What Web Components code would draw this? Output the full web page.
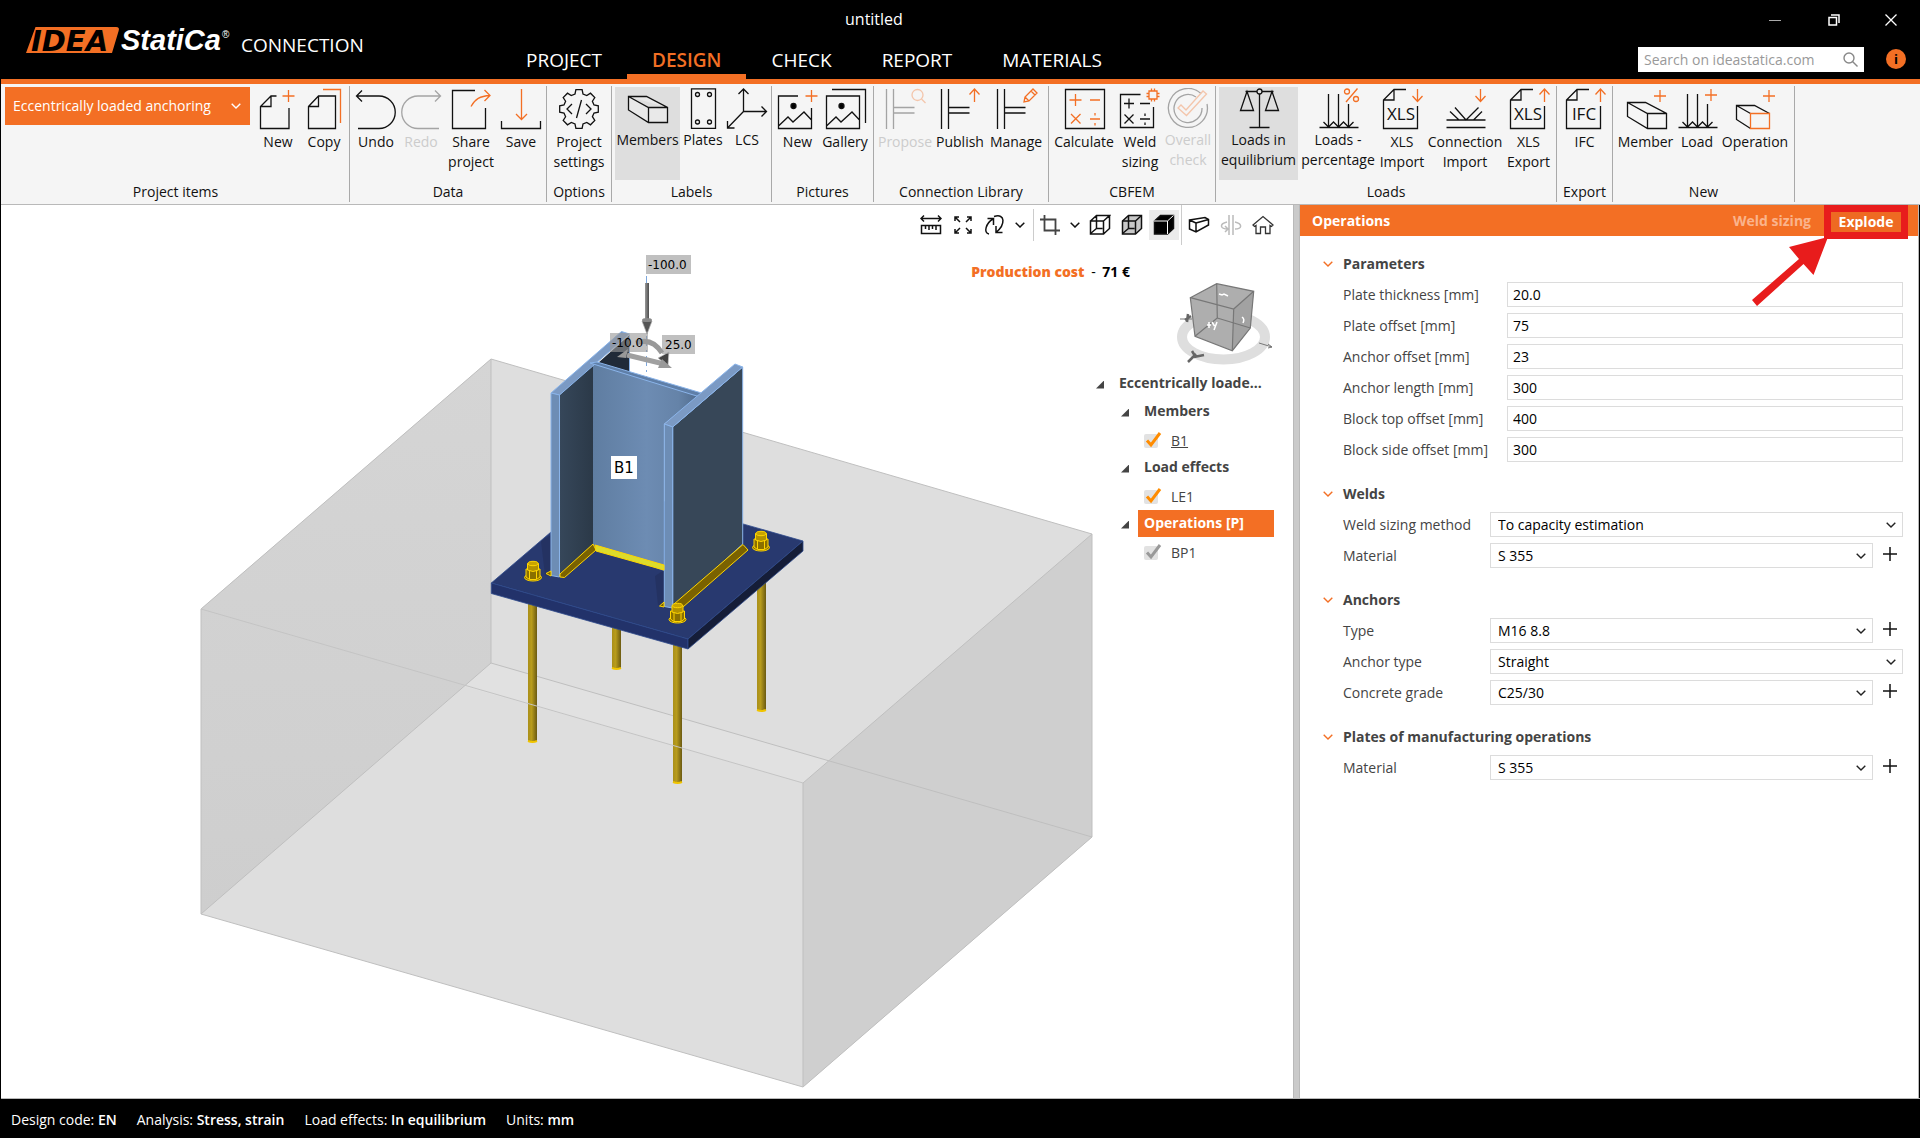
<!DOCTYPE html>
<html lang="en">
<head>
<meta charset="utf-8">
<title>IDEA StatiCa Connection</title>
<style>
  html, body { height: 100%; margin: 0; background: #000; }
  body { font: 14px/20px "Open Sans", "Noto Sans", sans-serif; color: #111; --orange: #f36f24; --line: #b9b9b9; }
</style>
</head>
<body>
<app-shell></app-shell>
<script>
const plus = (x, y, r = 6) => `<path class="o" d="M${x - r} ${y}h${2 * r}M${x} ${y - r}v${2 * r}"/>`;
const down = (x, y) => `<path class="o" d="M${x} ${y}v12M${x - 5} ${y + 7}l5 5.500 5-5.500"/>`;
const up = (x, y) => `<path class="o" d="M${x} ${y + 13}v-13M${x - 5} ${y + 5.5}l5-5.500 5 5.500"/>`;
const beam = '<path d="M5.500 1v40M12.500 1v40M12.500 19.500h21M12.500 25h21"/>';
const doc = word => `<path d="M28 1.500H16L5.500 12V40.500H39.500V18M16 1.500V12H5.500"/><text x="23" y="32" text-anchor="middle">${word}</text>`;
const loads = '<path d="M14.500 6v32M24.500 6v32M34.500 16v22M5.500 39.500h39M9.500 34l5 5 5-5 5 5 5-5 5 5 5-5"/>';
const gear = (() => {
  const pts = [];
  for (let i = 0; i < 8; i++) {
    for (const [a, r] of [[-15, 15.5], [-9, 19.5], [9, 19.5], [15, 15.5]]) {
      const t = (i * 45 + a) * Math.PI / 180;
      pts.push((24 + r * Math.sin(t)).toFixed(1) + ' ' + (21 - r * Math.cos(t)).toFixed(1));
    }
  }
  return 'M' + pts.join('L') + 'Z';
})();

const ICONS = {
  newdoc: '<path d="M22.500 8H17L6.500 18.500V40.500H35V20M17 8V18.500H6.500"/>' + plus(34.5, 8),
  copy: '<path d="M8.500 18.500L18.500 8H35.500V40.500H8.500ZM18.500 8V18.500H8.500"/><path class="o" d="M23 1.500H40.500V35"/>',
  undo: '<path d="M4.500 8H27a16.200 16.200 0 0 1 0 32.500H6M10 2.500L4.500 8L10 13.500"/>',
  redo: '<path d="M43.500 8H21a16.200 16.200 0 0 0 0 32.500H42M38 2.500L43.500 8L38 13.500"/>',
  share: '<path d="M28 2.500H5.500V40.500H38.500V20"/><path class="o" d="M24 18.500C28 11 33 8 43 7.500M37.500 2l5.500 5.500-5.500 5.500"/>',
  save: '<path d="M4.500 33V40.500H43.500V33"/><path class="o" d="M24.500 1V31.500M19 26l5.500 5.500 5.500-5.500"/>',
  settings: `<path d="${gear}"/><path d="M17 16l-5 5 5 5M31 16l5 5-5 5M26.500 12l-5 18"/>`,
  members: '<path fill="#e9e9e9" d="M4.500 8.500H22.500L43.500 19.500V34.500H24.500L4.500 22ZM4.500 8.500L24.500 19.500H43.500M24.500 19.500V34.500"/>',
  plates: '<path d="M12.500 .8h24v39.500h-24z"/><circle cx="18.500" cy="6.500" r="2"/><circle cx="30.500" cy="6.500" r="2"/><circle cx="18.500" cy="34" r="2"/><circle cx="30.500" cy="34" r="2"/>',
  lcs: '<path d="M20.500 1V23.500H43.500M20.500 23.500L4.500 40M15.500 6l5-5 5 5M38.500 18.500l5 5-5 5M4.500 33v7h7"/>',
  picnew: '<path d="M24 8H4.500V40.500H37.500V20M4.500 38L14 29l5 5L30 24l7.500 8"/><circle cx="19.500" cy="18" r="2.500" fill="#000"/>' + plus(37.5, 8),
  gallery: '<path d="M5.500 8H38.500V40.500H5.500ZM5.500 38L15 29l5 5L31 24l7.500 8M11 1.500H44.500V35"/><circle cx="20.500" cy="18" r="2.500" fill="#000"/>',
  propose: beam + '<g class="o"><circle cx="36.500" cy="7" r="5.500"/><path d="M40.500 11l4 4"/></g>',
  publish: beam + up(38.5, 1),
  manage: beam + '<path class="o" d="M32 14l1-5 8-8 4 4-8 8zM33 9l4 4M39 3l4 4"/>',
  calculate: '<path d="M5.500 1.500h39v39h-39z"/>' + plus(15.5, 12) + '<path class="o" d="M30 12h10M11 26l9.500 9.500M20.500 26L11 35.500M30 31h10"/><path class="o" d="M35 25v2.500M35 35v2.500"/>',
  weld: '<path d="M24.500 6.500H4.500V39.500H37.500V19"/><path d="M8 15.500h10M13 10.500v10M24 15.500h10M8.500 26.500l9 9M17.500 26.500l-9 9M24 31h10M29 25.500v2.500M29 34.500v2.500"/><path class="o" d="M33 3h8v8h-8zM35.500 3V.5M38.500 3V.5M35.500 11v2.500M38.500 11v2.500M33 5.500H30.500M33 8.500H30.500M41 5.500h2.500M41 8.500h2.500"/>',
  check: '<path d="M37 5.500A19.500 19.500 0 1 0 43 16M32 9A14 14 0 1 0 38 20"/><path class="o" d="M14 20l3-3 5 5L39 3l3.500 3L22.500 27.500z"/>',
  scales: '<circle cx="24.500" cy="3.500" r="2.500"/><path d="M22 3.500H10.500M27 3.500H38.500M24.500 6V39.500M14.500 39.500h20M12 3.500L5.500 22.500H18.500ZM37 3.500L30.500 22.500H43.500Z"/>',
  percent: loads + '<g class="o"><circle cx="33" cy="3.500" r="2.500"/><circle cx="42" cy="11" r="2.500"/><path d="M43.500 .5L32 14"/></g>',
  xlsin: doc('XLS') + down(39.5, 1),
  connin: '<path d="M5.500 32h39M5.500 39.500h39M14 19.500L25 32L37.500 19.500M9 23.500l9 8.500M41 23.500L32.500 32"/>' + down(39.5, 1),
  xlsout: doc('XLS') + up(39.5, 1),
  ifc: doc('IFC') + up(39.5, 1),
  member: '<path d="M5.500 14.500H23.500L44.500 25.500V40.500H25.500L5.500 28.500ZM5.500 14.500L25.500 25.500H44.500M25.500 25.500V40.500"/>' + plus(38, 8),
  load: loads + plus(38, 7),
  operation: '<path d="M38.500 25.500L23.500 17.500H5.500V31.500L19.500 40.500M5.500 17.500L19.500 25.500"/><path class="o" d="M19.500 25.500h19v15h-19z"/>' + plus(38, 8)
};

const CHEV = '<svg class="chev" width="10" height="6" viewBox="0 0 10 6" fill="none" stroke="currentColor" stroke-width="1.400"><path d="M.7.700L5 5 9.300.7"/></svg>';

const define = (name, markup, setup) => {
  const tpl = document.createElement('template');
  tpl.innerHTML = markup;
  customElements.define(name, class extends HTMLElement {
    connectedCallback() {
      if (this.shadowRoot) return;
      this.attachShadow({ mode: 'open' }).append(tpl.content.cloneNode(true));
      if (setup) setup(this, this.shadowRoot);
    }
  });
};

define('app-logo', `
<style>:host{display:block}svg{display:block}</style>
<svg width="208" height="48" viewBox="26 16 208 48" role="img">
  <path fill="#f36f24" d="M26 53L35.500 27H116Q120 27 118.600 31L112 53Z"/>
  <text x="31" y="51" font-family="DejaVu Sans" font-weight="bold" font-style="oblique" font-size="29">IDEA</text>
  <text x="121" y="50" fill="#fff" font-family="Liberation Sans" font-weight="bold" font-style="italic" font-size="29">StatiCa</text>
  <text x="222" y="38" fill="#fff" font-family="Liberation Sans" font-size="10">®</text>
</svg>`);

define('app-header', `
<style>
  :host{display:grid;grid-template-columns:500px 1fr auto;grid-template-rows:40px 39px;background:#000;color:#fff;border-bottom:5px solid var(--orange)}
  .brand{grid-row:1/3;display:flex;align-items:center;gap:7px;padding:0 0 0 25px;font-size:19px;height:80px}
  .brand span{padding-top:10px}
  .title{padding:7px 0 0 344px;font-size:16px;line-height:24px}
  nav{display:flex;align-items:stretch}
  nav a{padding:6px 25px 0;color:#fff;text-decoration:none;font-size:19px;line-height:28px;border-bottom:5px solid transparent}
  nav a.on{color:var(--orange);font-weight:600;border-color:var(--orange)}
  .win{display:flex;justify-content:flex-end;padding-right:1px}
  button{background:none;border:0;padding:0;width:57px;height:40px;display:grid;place-items:center;color:#fff}
  .win button:first-child{width:60px}
  .find{display:flex;align-items:flex-start;padding:7px 14px 0 0;gap:22px}
  .box{display:flex;align-items:center;background:#fff;width:226px;height:25px;box-sizing:border-box;padding:0 6px;color:#888}
  input{border:0;outline:0;flex:1;min-width:0;padding:0;font:inherit;background:none}
  input::placeholder{color:#999;opacity:1}
  .find button{width:20px;height:20px;border-radius:50%;background:var(--orange);color:#000;font:bold 13px/20px "Open Sans",sans-serif;margin-top:2px}
</style>
<div class="brand"><app-logo></app-logo><span>CONNECTION</span></div>
<div class="title">untitled</div>
<div class="win">
  <button aria-label="Minimize"><svg width="12" height="12"><path d="M0 6.500h12" stroke="#aaa"/></svg></button>
  <button aria-label="Restore"><svg width="12" height="12" fill="none" stroke="#fff" stroke-width="1.500"><path d="M1 3.500h7.500v7.500H1zM3 1h8v8"/></svg></button>
  <button aria-label="Close"><svg width="12" height="12" stroke="#fff" stroke-width="1.300"><path d="M.5.500l11 11M11.500.500l-11 11"/></svg></button>
</div>
<nav><a href="#project">PROJECT</a><a href="#design" class="on">DESIGN</a><a href="#check">CHECK</a><a href="#report">REPORT</a><a href="#materials">MATERIALS</a></nav>
<div class="find">
  <label class="box"><input type="search" placeholder="Search on ideastatica.com" aria-label="Search on ideastatica.com"><svg width="15" height="15" fill="none" stroke="#888" stroke-width="1.400"><circle cx="6" cy="6" r="5"/><path d="M9.500 9.500l5 5"/></svg></label>
  <button aria-label="Information">i</button>
</div>`);

define('ribbon-button', `
<style>
  :host{display:block;height:93px}
  button{width:100%;height:100%;border:0;background:none;padding:1px 0 0;display:flex;flex-direction:column;align-items:center;gap:2px;font:inherit;color:#111}
  :host([active]) button{background:#dedede}
  :host([disabled]) button{color:#ccc}
  :host([tight]) button{gap:0}
  svg{display:block;flex:none;fill:none;stroke:#111;stroke-width:1.300}
  svg text{fill:#111;stroke:none;font-size:17px}
  .o{stroke:var(--orange)}
  :host([disabled]) svg{opacity:.35}
  span{white-space:pre;text-align:center;line-height:20px}
</style>
<button><svg width="48" height="42" viewBox="0 0 48 42"></svg><span><slot></slot></span></button>`,
(el, root) => {
  root.querySelector('svg').innerHTML = ICONS[el.getAttribute('icon')];
  root.querySelector('button').disabled = el.hasAttribute('disabled');
  el.style.width = el.getAttribute('w') + 'px';
});

define('ribbon-group', `
<style>
  :host{display:flex;flex-direction:column;justify-content:space-between;padding:1px 3px 0;height:115px;border-right:1px solid #a9a9a9;flex:none}
  .tools{display:flex}
  .name{text-align:center;line-height:20px}
</style>
<div class="tools"><slot></slot></div><div class="name"></div>`,
(el, root) => { root.querySelector('.name').textContent = el.getAttribute('name'); });

define('item-picker', `
<style>
  :host{display:grid;width:245px;height:38px;margin-right:4px;background:var(--orange);color:#fff;align-items:center}
  select{grid-area:1/1;appearance:none;border:0;background:none;color:#fff;font:inherit;height:100%;padding:0 30px 0 8px}
  .chev{grid-area:1/1;justify-self:end;margin-right:9px;pointer-events:none}
</style>
<select aria-label="Project item"><option>Eccentrically loaded anchoring</option></select>${CHEV}`);

define('ribbon-bar', `
<style>:host{display:flex;background:#f5f5f5;padding:2px 0 2px 1px;border-bottom:1px solid var(--line)}</style>
<ribbon-group name="Project items"><item-picker></item-picker><ribbon-button icon="newdoc" w="48">New</ribbon-button><ribbon-button icon="copy" w="44">Copy</ribbon-button></ribbon-group>
<ribbon-group name="Data"><ribbon-button icon="undo" w="46">Undo</ribbon-button><ribbon-button icon="redo" w="44" disabled>Redo</ribbon-button><ribbon-button icon="share" w="56">Share
project</ribbon-button><ribbon-button icon="save" w="44">Save</ribbon-button></ribbon-group>
<ribbon-group name="Options"><ribbon-button icon="settings" w="58">Project
settings</ribbon-button></ribbon-group>
<ribbon-group name="Labels"><ribbon-button icon="members" w="65" active tight>Members</ribbon-button><ribbon-button icon="plates" w="46" tight>Plates</ribbon-button><ribbon-button icon="lcs" w="42" tight>LCS</ribbon-button></ribbon-group>
<ribbon-group name="Pictures"><ribbon-button icon="picnew" w="45">New</ribbon-button><ribbon-button icon="gallery" w="50">Gallery</ribbon-button></ribbon-group>
<ribbon-group name="Connection Library"><ribbon-button icon="propose" w="56" disabled>Propose</ribbon-button><ribbon-button icon="publish" w="54">Publish</ribbon-button><ribbon-button icon="manage" w="58">Manage</ribbon-button></ribbon-group>
<ribbon-group name="CBFEM"><ribbon-button icon="calculate" w="64">Calculate</ribbon-button><ribbon-button icon="weld" w="48">Weld
sizing</ribbon-button><ribbon-button icon="check" w="48" disabled tight>Overall
check</ribbon-button></ribbon-group>
<ribbon-group name="Loads"><ribbon-button icon="scales" w="79" active tight>Loads in
equilibrium</ribbon-button><ribbon-button icon="percent" w="80" tight>Loads -
percentage</ribbon-button><ribbon-button icon="xlsin" w="48">XLS
Import</ribbon-button><ribbon-button icon="connin" w="78">Connection
Import</ribbon-button><ribbon-button icon="xlsout" w="49">XLS
Export</ribbon-button></ribbon-group>
<ribbon-group name="Export"><ribbon-button icon="ifc" w="49">IFC</ribbon-button></ribbon-group>
<ribbon-group name="New"><ribbon-button icon="member" w="59">Member</ribbon-button><ribbon-button icon="load" w="44">Load</ribbon-button><ribbon-button icon="operation" w="72">Operation</ribbon-button></ribbon-group>`);

define('model-scene', `
<style>:host{display:block}svg{display:block;width:100%;height:100%}text{font-family:"DejaVu Sans",sans-serif}</style>
<svg viewBox="1 205 1292 893" role="img" aria-label="Anchored column on a concrete block">
  <defs>
    <linearGradient id="rod"><stop offset="0" stop-color="#a98f1a"/><stop offset=".4" stop-color="#b89c1c"/><stop offset="1" stop-color="#6b5a12"/></linearGradient>
    <linearGradient id="web"><stop offset="0" stop-color="#5f7da1"/><stop offset=".5" stop-color="#6d8cb3"/><stop offset=".8" stop-color="#6583a8"/><stop offset="1" stop-color="#4f6a8c"/></linearGradient>
    <linearGradient id="inner"><stop offset="0" stop-color="#36475a"/><stop offset="1" stop-color="#2b3948"/></linearGradient>
    <linearGradient id="left" x2="0" y2="1"><stop offset="0" stop-color="#d5d5d5"/><stop offset="1" stop-color="#cecece"/></linearGradient>
    <linearGradient id="gr"><stop offset="0" stop-color="#999"/><stop offset="1" stop-color="#4d4d4d"/></linearGradient>
    <g id="nut" stroke="#ffd500">
      <ellipse cx="0" cy="6.500" rx="8.500" ry="3.500" fill="#8a7000"/>
      <path fill="#8a7000" d="M-7-2h14v8l-3.500 2.500h-7L-7 6z"/>
      <path fill="none" d="M-3.500 0v8M3.500 0v8"/>
      <path fill="#b39200" d="M-5.500-7.500V-1Q0 2 5.500-1V-7.500Z"/><ellipse cx="0" cy="-7.500" rx="5" ry="2.200" fill="#c9a400"/>
    </g>
  </defs>
  <path fill="#dedede" d="M201 609L491 359L1092 534V837L803 1087L201 914Z"/>
  <path fill="#e2e2e2" d="M491 663L1092 837L803 783L463 686Z" opacity=".7"/>
  <path fill="url(#left)" d="M201 609L491 359V663L201 914Z"/>
  <path fill="#cfcfcf" d="M803 783L1092 534V837L803 1087Z"/>
  <g fill="none" stroke="#bfbfbf"><path d="M201 609L491 359L1092 534V837L803 1087L201 914ZM803 783V1087M803 783L1092 534M491 359V663L201 914M491 663L1092 837"/></g>
  <g fill="url(#rod)">
    <rect x="612" y="615" width="9" height="53"/><rect x="757" y="560" width="9" height="151"/>
    <rect x="528" y="590" width="9" height="151"/><rect x="673" y="635" width="9" height="148"/>
  </g>
  <path fill="none" stroke="#f0c400" stroke-width="2" d="M612 668q4.500 2 9 0M757 710q4.500 2 9 0M528 741q4.500 2 9 0M673 782q4.500 2 9 0"/>
  <path fill="none" stroke="#c4c4c4" d="M201 609L803 783"/>
  <g stroke="#2f4a8c" stroke-width=".8">
    <path fill="#28396f" d="M491.300 583L606 485L803 541L688 639Z"/>
    <path fill="#22326a" d="M491.300 583L688 639V649L491.300 593.500Z"/>
    <path fill="#151d38" d="M688 639L803 541V551L688 649Z"/>
  </g>
  <path fill="#1f2b55" opacity=".5" d="M551 535L541 541L545 575L551 577ZM664 570L655 576L658 605L664 607Z"/>
  <path stroke="#7da7dc" stroke-dasharray="10 4 2 4" d="M646.500 276V377"/>
  <g stroke="#8ab4ea" stroke-linejoin="round">
    <path fill="#202a38" stroke="none" d="M598 363L629.500 335V373Z"/><path fill="none" d="M629.500 336V373"/>
    <path fill="url(#inner)" stroke="none" d="M559.500 395L593 364V545L559.500 577Z"/>
    <path fill="url(#web)" stroke="none" d="M593 363L700 396L664 424V571L593 545Z"/>
    <path fill="#7b9ac4" d="M551 393L621.500 331.500L629.500 334L559.500 395Z"/>
    <path fill="#5f7fa8" d="M590 363L597 362L705 394L700 397Z"/>
    <path fill="#6d8db5" d="M551 393L559.500 395V577L551 575.500Z"/>
    <path fill="#374758" d="M672.700 427L742.700 367V544L672.700 608Z"/>
    <path fill="#7b9ac4" d="M664.300 424L735 364L742.700 367L672.700 427Z"/>
    <path fill="#6d8db5" d="M664.300 424L672.700 427V608L664.300 606.500Z"/>
  </g>
  <g stroke="#ffd500" stroke-linejoin="round">
    <path fill="#7a6200" d="M560 574L593 544L596 550L564.500 577.500L560 577Z"/>
    <path fill="#dcdc2c" d="M595 545L664 565V570L596 551Z"/>
    <path fill="#7a6200" d="M674 604L743 544.500L748 550L683 607Z"/>
    <path fill="#7a6200" d="M546 573.500L551 571V576ZM659.500 606L664 602V607Z"/>
  </g>
  <use href="#nut" x="533" y="571"/><use href="#nut" x="761" y="541"/><use href="#nut" x="677.500" y="613"/>
  <rect x="645" y="283" width="4" height="38" fill="url(#gr)"/><path fill="#555" stroke="#aaa" stroke-width=".7" d="M642 321h10l-5 13z"/><ellipse cx="647" cy="320" rx="5" ry="2" fill="#888"/>
  <path fill="none" stroke="#999" stroke-width="5" d="M636 343Q652 337 662 353"/><path fill="#444" stroke="#ccc" stroke-width=".7" d="M658 358L669 352L668 366Z"/>
  <path stroke="#a0a0a0" stroke-width="5" d="M627 355L664 364"/><path fill="#999" d="M658 368L672 368L662 359ZM617 357L628 349L626 358Z"/>
  <g font-size="12"><g fill="#9a9a9a" fill-opacity=".62"><rect x="646" y="255" width="45" height="19"/><rect x="610" y="333" width="38" height="19"/><rect x="662" y="335" width="33" height="19"/></g>
    <text x="648" y="269">-100.0</text><text x="612" y="347">-10.0</text><text x="665" y="349">25.0</text></g>
  <rect x="611" y="456" width="26" height="23" fill="#fff"/><text x="614" y="473" font-size="15">B1</text>
</svg>`);

define('view-cube', `
<style>:host{display:block}svg{display:block}</style>
<svg width="100" height="84" viewBox="1175 281 100 84" fill="none">
  <ellipse cx="1223.500" cy="336" rx="41.500" ry="22.500" stroke="#dedede" stroke-width="10"/>
  <path fill="#aeaeae" d="M1190.300 296.700L1216.700 282.700L1253.700 290.300L1250.300 327L1232.300 349.700L1195 335.300Z"/>
  <path fill="#a2a2a2" d="M1253.700 290.300L1250.300 327L1232.300 349.700L1233.700 308Z"/>
  <path stroke="#777" stroke-width="1.200" d="M1190.300 296.700L1216.700 282.700L1253.700 290.300L1250.300 327L1232.300 349.700L1195 335.300ZM1190.300 296.700L1233.700 308L1253.700 290.300M1233.700 308L1232.300 349.700M1216.700 282.700L1217.300 317L1195 335.300M1217.300 317L1250.300 327"/>
  <path stroke="#fff" stroke-width="1.500" d="M1209 321v6M1207 324h4M1212 321l2.500 4M1217 321l-3 8M1219 293l3 1 2-1 4 2M1242 316q3 2 1 6"/>
  <path stroke="#777" d="M1180 318h12M1259 342l13 4M1268 343l4 3-4 1"/><path stroke="#666" stroke-width="2.500" d="M1188 313l-1 8M1185 319l6-4M1188 361l8-8M1192 350l3 5M1204 354l-10 2"/>
</svg>`);

define('tree-row', `
<style>
  :host{display:grid;grid-template-columns:auto 1fr;height:28px;align-items:center;color:#444}
  .head{font-weight:700;line-height:26px;height:27px;padding-left:6px;white-space:nowrap}
  :host([level="2"]){padding-left:25px}
  :host([level="3"]){padding:4px 0 0 48px;box-sizing:border-box}
  :host([selected]) .head{background:var(--orange);color:#fff}
  .arrow{width:8px;height:8px;background:#444;clip-path:polygon(100% 0,100% 100%,0 100%);margin:3px 9px 0 0}
  .tick{display:grid;width:14px;height:14px}
  input{appearance:none;margin:0;grid-area:1/1;width:14px;height:14px;border-radius:2px;background:#e2e2e2}
  svg{grid-area:1/1;overflow:visible;pointer-events:none}
  label{padding-left:13px}
  :host([link]) label{text-decoration:underline}
</style><slot name="x"></slot>`,
(el, root) => {
  const text = el.getAttribute('text');
  const box = document.createElement('template');
  const id = 'c-' + text;
  box.innerHTML = el.getAttribute('level') === '3'
    ? `<span class="tick"><input type="checkbox" checked id="${id}"><svg width="14" height="14" fill="none" stroke="${el.getAttribute('tick')}" stroke-width="3"><path d="M3 6.500l4 4.500L16-1"/></svg></span><label for="${id}">${text}</label>`
    : `<span class="arrow"></span><span class="head">${text}</span>`;
  root.querySelector('slot').replaceWith(box.content);
});

define('model-viewport', `
<style>
  :host{position:relative;display:flex;flex-direction:column;align-items:flex-end;background:#fff;min-width:0;flex:1}
  model-scene{position:absolute;inset:0}
  .bar,.cost,view-cube,.tree{position:relative}
  .bar{display:flex;align-items:center;height:40px;padding-right:14px}
  .bar button{width:32px;height:30px;padding:0;border:0;background:none;display:grid;place-items:center;color:#222}
  .bar button.c{width:18px}
  .bar button.on{background:#ebebeb;width:30px;margin:0 1px}
  .bar i{width:1px;height:32px;background:#ccc;margin-left:4px}
  .bar i.b{height:40px;margin:0 1px}
  .bar svg{fill:none;stroke:#111;stroke-width:1.500}
  .cost{padding:17px 163px 0 0;font-weight:700;color:#000}
  .cost b{color:var(--orange)} .cost span{font-weight:400;padding:0 3px}
  view-cube{margin:0 18px 3px 0}
  .tree{width:178px;margin-right:19px}
</style>
<model-scene></model-scene>
<div class="bar">
  <button aria-label="Measure"><svg width="22" height="22"><path d="M1 4.500h20M4 1.500l-3 3 3 3M18 1.500l3 3-3 3M1.500 11.500h19v8h-19zM5.500 12v3M9 12v4M12.500 12v3M16 12v4"/></svg></button>
  <button aria-label="Zoom to fit"><svg width="20" height="20"><path d="M2 6V2h4M2 2l5 5M14 2h4v4M18 2l-5 5M2 14v4h4M2 18l5-5M18 14v4h-4M18 18l-5-5"/></svg></button>
  <button aria-label="Rotate"><svg width="22" height="22"><path d="M5 20C-1 19 2 9 9 5M3.500 4.500H9.500V11M10 2.500C22-1 21 11 12.500 18M12 12v6.500h6.500"/></svg></button>
  <button class="c" aria-label="Rotate options">${CHEV}</button><i></i>
  <button aria-label="Section"><svg width="20" height="20" ><path stroke="#444" stroke-width="1.800" d="M0 4.500h15.500V20M4.500 0v15.500H20"/></svg></button>
  <button class="c" aria-label="Section options">${CHEV}</button>
  <button aria-label="Wireframe"><svg width="22" height="22"><path d="M1.500 7h13v13h-13zM1.500 7l6-5.500h13L14.500 7M20.500 1.500v13l-6 5.500M7.500 2v12.500l-6 5M7.500 14.500h6"/></svg></button>
  <button aria-label="Transparent"><svg width="22" height="22"><path fill="#c8c8c8" d="M1.500 7l6-5.500h13v13l-6 5.500h-13z"/><path d="M1.500 7h13v13M14.500 7l6-5.500M7.500 2v12.500l-6 5M7.500 14.500h6"/></svg></button>
  <button class="on" aria-label="Solid"><svg width="22" height="22"><path fill="#000" d="M1.500 7l6-5.500h13v13l-6 5.500h-13z"/><path stroke="#fff" stroke-width="1" d="M1 7h13.500l6-5.500M14.500 7v13"/></svg></button><i class="b"></i>
  <button aria-label="Member view"><svg width="22" height="18"><path d="M1.500 4L17 1.500l3.500 2V9L8 16l-6.500-3zM1.500 4L8 7v9M8 7l12.500-3.500"/></svg></button>
  <button aria-label="Spin"><svg width="22" height="22"><path stroke="#bbb" d="M9 1v20M13 1v20M7 8C-1 10 0 15 8 15M15 8c8 2 7 7 0 7M5 12l3 3-3 3"/></svg></button>
  <button aria-label="Home"><svg width="22" height="20"><path stroke="#333" stroke-width="1.300" d="M1 10L11 1.500 21 10l-1.500 1.500L18 10.500V18.500h-4.500V12h-5v6.500H4V10.500l-1.500 1z"/></svg></button>
</div>
<div class="cost"><b>Production cost</b> <span>-</span> 71 €</div>
<view-cube></view-cube>
<div class="tree">
  <tree-row level="1" text="Eccentrically loade..."></tree-row>
  <tree-row level="2" text="Members"></tree-row>
  <tree-row level="3" text="B1" tick="#ff8c00" link></tree-row>
  <tree-row level="2" text="Load effects"></tree-row>
  <tree-row level="3" text="LE1" tick="#ff8c00"></tree-row>
  <tree-row level="2" text="Operations [P]" selected></tree-row>
  <tree-row level="3" text="BP1" tick="#999"></tree-row>
</div>`);

define('param-field', `
<style>
  :host{display:grid;grid-template-columns:164px 1fr;height:25px;align-items:center;color:#444}
  :host([options]){grid-template-columns:147px 1fr}
  :host([add]){grid-template-columns:147px 1fr 30px}
  input,select{grid-area:1/2;appearance:none;width:100%;height:25px;box-sizing:border-box;border:1px solid #dcdcdc;border-radius:0;background:#fff;font:inherit;line-height:20px;color:#000;padding:0 5px;outline:0}
  select{padding:0 7px}
  label{white-space:nowrap}
  .chev{grid-area:1/2;justify-self:end;margin-right:7px;pointer-events:none;color:#222}
  button{width:30px;height:25px;border:0;background:none;padding:0 0 0 3px}
</style>`,
(el, root) => {
  const name = el.getAttribute('label');
  const value = el.getAttribute('value');
  const pick = el.hasAttribute('options');
  const t = document.createElement('template');
  t.innerHTML = `<label for="f">${name}</label>` + (pick
    ? `<select id="f"><option>${value}</option></select>${CHEV}`
    : `<input id="f" type="text" value="${value}">`)
    + (el.hasAttribute('add') ? `<button aria-label="Add ${name}"><svg width="14" height="14" stroke="#111" stroke-width="1.500"><path d="M0 7h14M7 0v14"/></svg></button>` : '');
  root.append(t.content);
});

define('param-section', `
<style>
  :host{display:flex;flex-direction:column;gap:6px}
  h3{margin:0;font:700 14px/24px "Open Sans","Noto Sans",sans-serif;color:#444;display:flex;align-items:center;gap:10px}
  .chev{color:var(--orange);margin-left:-20px}
</style>
<h3>${CHEV}<span></span></h3><slot></slot>`,
(el, root) => { root.querySelector('span').textContent = el.getAttribute('title-text'); });

define('operations-panel', `
<style>
  :host{display:block;background:#fff;width:619px;flex:none;position:relative;border-right:1px solid var(--line);margin-right:1px;box-sizing:border-box}
  header{display:flex;align-items:center;height:31px;background:var(--orange);color:#fff;font-weight:700;padding:0 10px 0 12px}
  h2{font:inherit;margin:0;flex:1}
  button{font:inherit;border:0;background:none;color:#fff;padding:0}
  .weld{color:#fab48c;margin-right:13px}
  .explode{width:84px;height:34px;box-sizing:border-box;border:7px solid #e81c1c;background:#ee6a22;align-self:flex-start}
  .body{display:flex;flex-direction:column;gap:20px;padding:16px 15px 0 43px}
  .pointer{position:absolute;right:89px;top:32px}
</style>
<header><h2>Operations</h2><button class="weld" disabled>Weld sizing</button><button class="explode">Explode</button></header>
<div class="body">
  <param-section title-text="Parameters">
    <param-field label="Plate thickness [mm]" value="20.0"></param-field>
    <param-field label="Plate offset [mm]" value="75"></param-field>
    <param-field label="Anchor offset [mm]" value="23"></param-field>
    <param-field label="Anchor length [mm]" value="300"></param-field>
    <param-field label="Block top offset [mm]" value="400"></param-field>
    <param-field label="Block side offset [mm]" value="300"></param-field>
  </param-section>
  <param-section title-text="Welds">
    <param-field label="Weld sizing method" value="To capacity estimation" options></param-field>
    <param-field label="Material" value="S 355" options add></param-field>
  </param-section>
  <param-section title-text="Anchors">
    <param-field label="Type" value="M16 8.8" options add></param-field>
    <param-field label="Anchor type" value="Straight" options></param-field>
    <param-field label="Concrete grade" value="C25/30" options add></param-field>
  </param-section>
  <param-section title-text="Plates of manufacturing operations">
    <param-field label="Material" value="S 355" options add></param-field>
  </param-section>
</div>
<svg class="pointer" width="77" height="70" viewBox="1752 237 77 70"><path fill="#e81c1c" d="M1828 237L1789 247L1799 259L1752 300L1757 306L1803.500 264L1813.500 275Z"/></svg>`);

define('status-bar', `
<style>
  :host{display:flex;align-items:center;gap:20px;height:40px;box-sizing:border-box;padding:3px 10px 0;color:#fff;border-top:1px solid var(--line)}
  b{font-weight:600}
</style>
<span>Design code: <b>EN</b></span><span>Analysis: <b>Stress, strain</b></span><span>Load effects: <b>In equilibrium</b></span><span>Units: <b>mm</b></span>`);

define('app-shell', `
<style>
  :host{display:flex;flex-direction:column;min-height:100vh;padding-left:1px;box-sizing:border-box}
  main{display:flex;flex:1}
  .split{width:7px;box-sizing:border-box;background:#cacaca;border:solid var(--line);border-width:0 1px}
</style>
<app-header></app-header><ribbon-bar></ribbon-bar>
<main><model-viewport></model-viewport><div class="split"></div><operations-panel></operations-panel></main>
<status-bar></status-bar>`);
</script>
</body>
</html>
